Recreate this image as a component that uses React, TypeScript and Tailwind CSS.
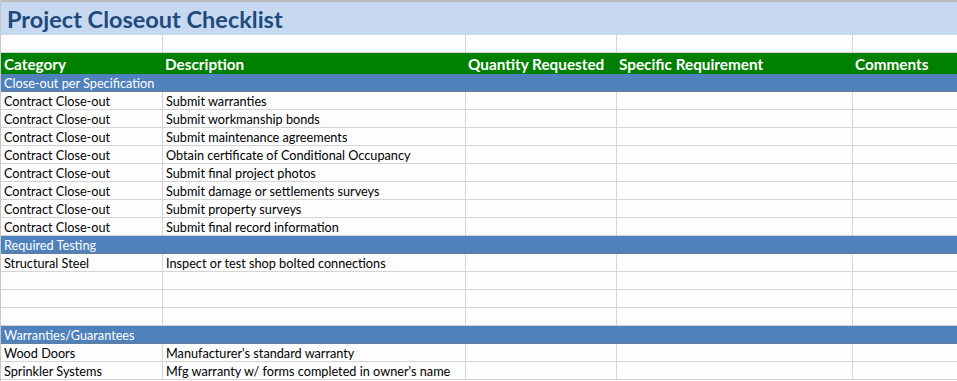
import React from "react";

type Row =
  | { kind: "section"; label: string }
  | { kind: "item"; category: string; description: string }
  | { kind: "blank" };

const rows: Row[] = [
  { kind: "section", label: "Close-out per Specification" },
  { kind: "item", category: "Contract Close-out", description: "Submit warranties" },
  { kind: "item", category: "Contract Close-out", description: "Submit workmanship bonds" },
  { kind: "item", category: "Contract Close-out", description: "Submit maintenance agreements" },
  { kind: "item", category: "Contract Close-out", description: "Obtain certificate of Conditional Occupancy" },
  { kind: "item", category: "Contract Close-out", description: "Submit final project photos" },
  { kind: "item", category: "Contract Close-out", description: "Submit damage or settlements surveys" },
  { kind: "item", category: "Contract Close-out", description: "Submit property surveys" },
  { kind: "item", category: "Contract Close-out", description: "Submit final record information" },
  { kind: "section", label: "Required Testing" },
  { kind: "item", category: "Structural Steel", description: "Inspect or test shop bolted connections" },
  { kind: "blank" },
  { kind: "blank" },
  { kind: "blank" },
  { kind: "section", label: "Warranties/Guarantees" },
  { kind: "item", category: "Wood Doors", description: "Manufacturer's standard warranty" },
  { kind: "item", category: "Sprinkler Systems", description: "Mfg warranty w/ forms completed in owner's name" },
];

const cols = "grid grid-cols-[162px_303px_151px_236px_105px]";
const cell = "border-r border-b border-[#d4d4d4] px-[3px] pt-[2px] whitespace-nowrap overflow-hidden";

function GridRow({ cells }: { cells: string[] }) {
  return (
    <div className={`${cols} h-[18px] leading-[15px] bg-[#fdfdfd]`}>
      {cells.map((c, i) => (
        <div key={i} className={cell}>{c}</div>
      ))}
    </div>
  );
}

export default function App() {
  return (
    <div className="w-[957px] h-[381px] overflow-hidden bg-white border-l border-[#c8c8c8] text-[12.7px] text-black font-['Lato',sans-serif]">
      <div className="h-[35px] border-t-2 border-[#bcbcbc] bg-[#c6d9f1] flex items-center px-[6px] pt-[3px]">
        <h1 className="text-[23.5px] font-bold text-[#1e4a7c] leading-none">Project Closeout Checklist</h1>
      </div>
      <GridRow cells={["", "", "", "", ""]} />
      <div className={`${cols} h-[21px] bg-[#008000] text-white font-bold text-[15.3px] items-center leading-[18px]`}>
        <div className="px-[3px]">Category</div>
        <div className="px-[2px]">Description</div>
        <div className="px-[2px]">Quantity Requested</div>
        <div className="px-[2px]">Specific Requirement</div>
        <div className="px-[2px]">Comments</div>
      </div>
      {rows.map((r, i) =>
        r.kind === "section" ? (
          <div key={i} className="h-[18px] bg-[#4f81bd] border-b-2 border-[#5a7fa8] text-white px-[3px] pt-[2px] leading-[14px]">
            {r.label}
          </div>
        ) : r.kind === "item" ? (
          <GridRow key={i} cells={[r.category, r.description, "", "", ""]} />
        ) : (
          <GridRow key={i} cells={["", "", "", "", ""]} />
        )
      )}
    </div>
  );
}
